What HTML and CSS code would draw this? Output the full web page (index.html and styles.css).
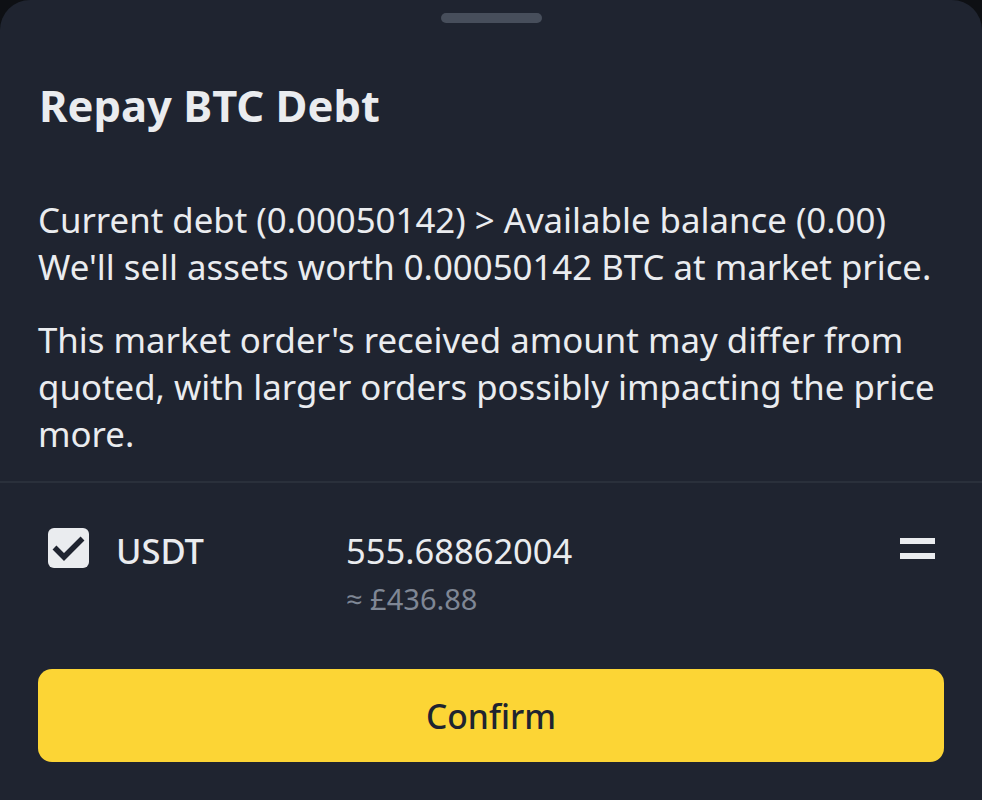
FILE: index.html
```html
<!DOCTYPE html>
<html lang="en">
<head>
<meta charset="utf-8">
<title>Repay BTC Debt</title>
<link rel="stylesheet" href="styles.css">
</head>
<body>
<div class="sheet">
  <div class="handle"></div>
  <h1 class="title">Repay BTC Debt</h1>
  <div class="content">
    <p class="para">Current debt (0.00050142) &gt; Available balance (0.00)<br>We'll sell assets worth 0.00050142 BTC at market price.</p>
    <p class="para para-second">This market order's received amount may differ from quoted, with larger orders possibly impacting the price more.</p>
  </div>
  <div class="divider"></div>
  <div class="asset-row">
    <div class="check">
      <svg width="41" height="40" viewBox="0 0 41 40"><rect x="0" y="0" width="41" height="40" rx="6" fill="#EAECEF"/><path d="M6.5 19.5 L16 29 L34.5 10.5" fill="none" stroke="#1f2430" stroke-width="5.5" stroke-linejoin="miter"/></svg>
    </div>
    <div class="coin">USDT</div>
    <div class="amounts">
      <div class="amount">555.68862004</div>
      <div class="fiat">≈ £436.88</div>
    </div>
    <div class="drag">
      <svg width="35" height="21" viewBox="0 0 35 21"><rect x="0" y="0" width="35" height="6" fill="#EAECEF"/><rect x="0" y="15" width="35" height="6" fill="#EAECEF"/></svg>
    </div>
  </div>
  <div class="actions">
    <button class="confirm">Confirm</button>
  </div>
</div>
</body>
</html>
```
FILE: styles.css
```css
* { box-sizing: border-box; }
html, body { margin: 0; padding: 0; }
body {
  background: #0e1014;
  font-family: "Noto Sans", "Open Sans", sans-serif;
  color: #EAECEF;
  width: 982px;
  height: 800px;
  overflow: hidden;
}
.sheet {
  background: #1f2430;
  border-radius: 30px 30px 0 0;
  height: 800px;
  padding-top: 13px;
}
.handle {
  width: 101px;
  height: 10px;
  border-radius: 5px;
  background: #474e5b;
  margin: 0 auto;
}
.title {
  margin: 56px 0 0 0;
  padding: 0 39px;
  font-size: 43.5px;
  line-height: 52px;
  font-weight: 700;
  color: #EAECEF;
}
.content {
  padding: 65px 30px 0 38px;
}
.para {
  margin: 0;
  font-size: 34.8px;
  line-height: 47px;
  font-weight: 400;
  color: #EAECEF;
}
.para-second {
  margin-top: 26px;
}
.divider {
  margin-top: 24px;
  height: 2px;
  background: #2a303b;
}
.asset-row {
  display: flex;
  align-items: flex-start;
  padding: 45px 47px 0 48px;
}
.check {
  width: 41px;
  height: 40px;
  flex: none;
}
.check svg { display: block; }
.coin {
  margin-left: 27px;
  width: 230px;
  flex: none;
  font-size: 34.5px;
  line-height: 46px;
  font-weight: 500;
}
.amounts {
  flex: 1;
}
.amount {
  font-size: 34.5px;
  line-height: 46px;
  font-weight: 400;
}
.fiat {
  margin-top: 5px;
  font-size: 29px;
  line-height: 40px;
  color: #7f8795;
}
.drag {
  flex: none;
  margin-top: 10px;
}
.drag svg { display: block; }
.actions {
  padding: 50px 38px 0 38px;
}
.confirm {
  display: flex;
  align-items: center;
  justify-content: center;
  width: 100%;
  height: 93px;
  border: none;
  border-radius: 14px;
  background: #FCD535;
  color: #1f2430;
  font-family: "Noto Sans", "Open Sans", sans-serif;
  font-size: 33.6px;
  font-weight: 500;
  padding: 0;
}
```
